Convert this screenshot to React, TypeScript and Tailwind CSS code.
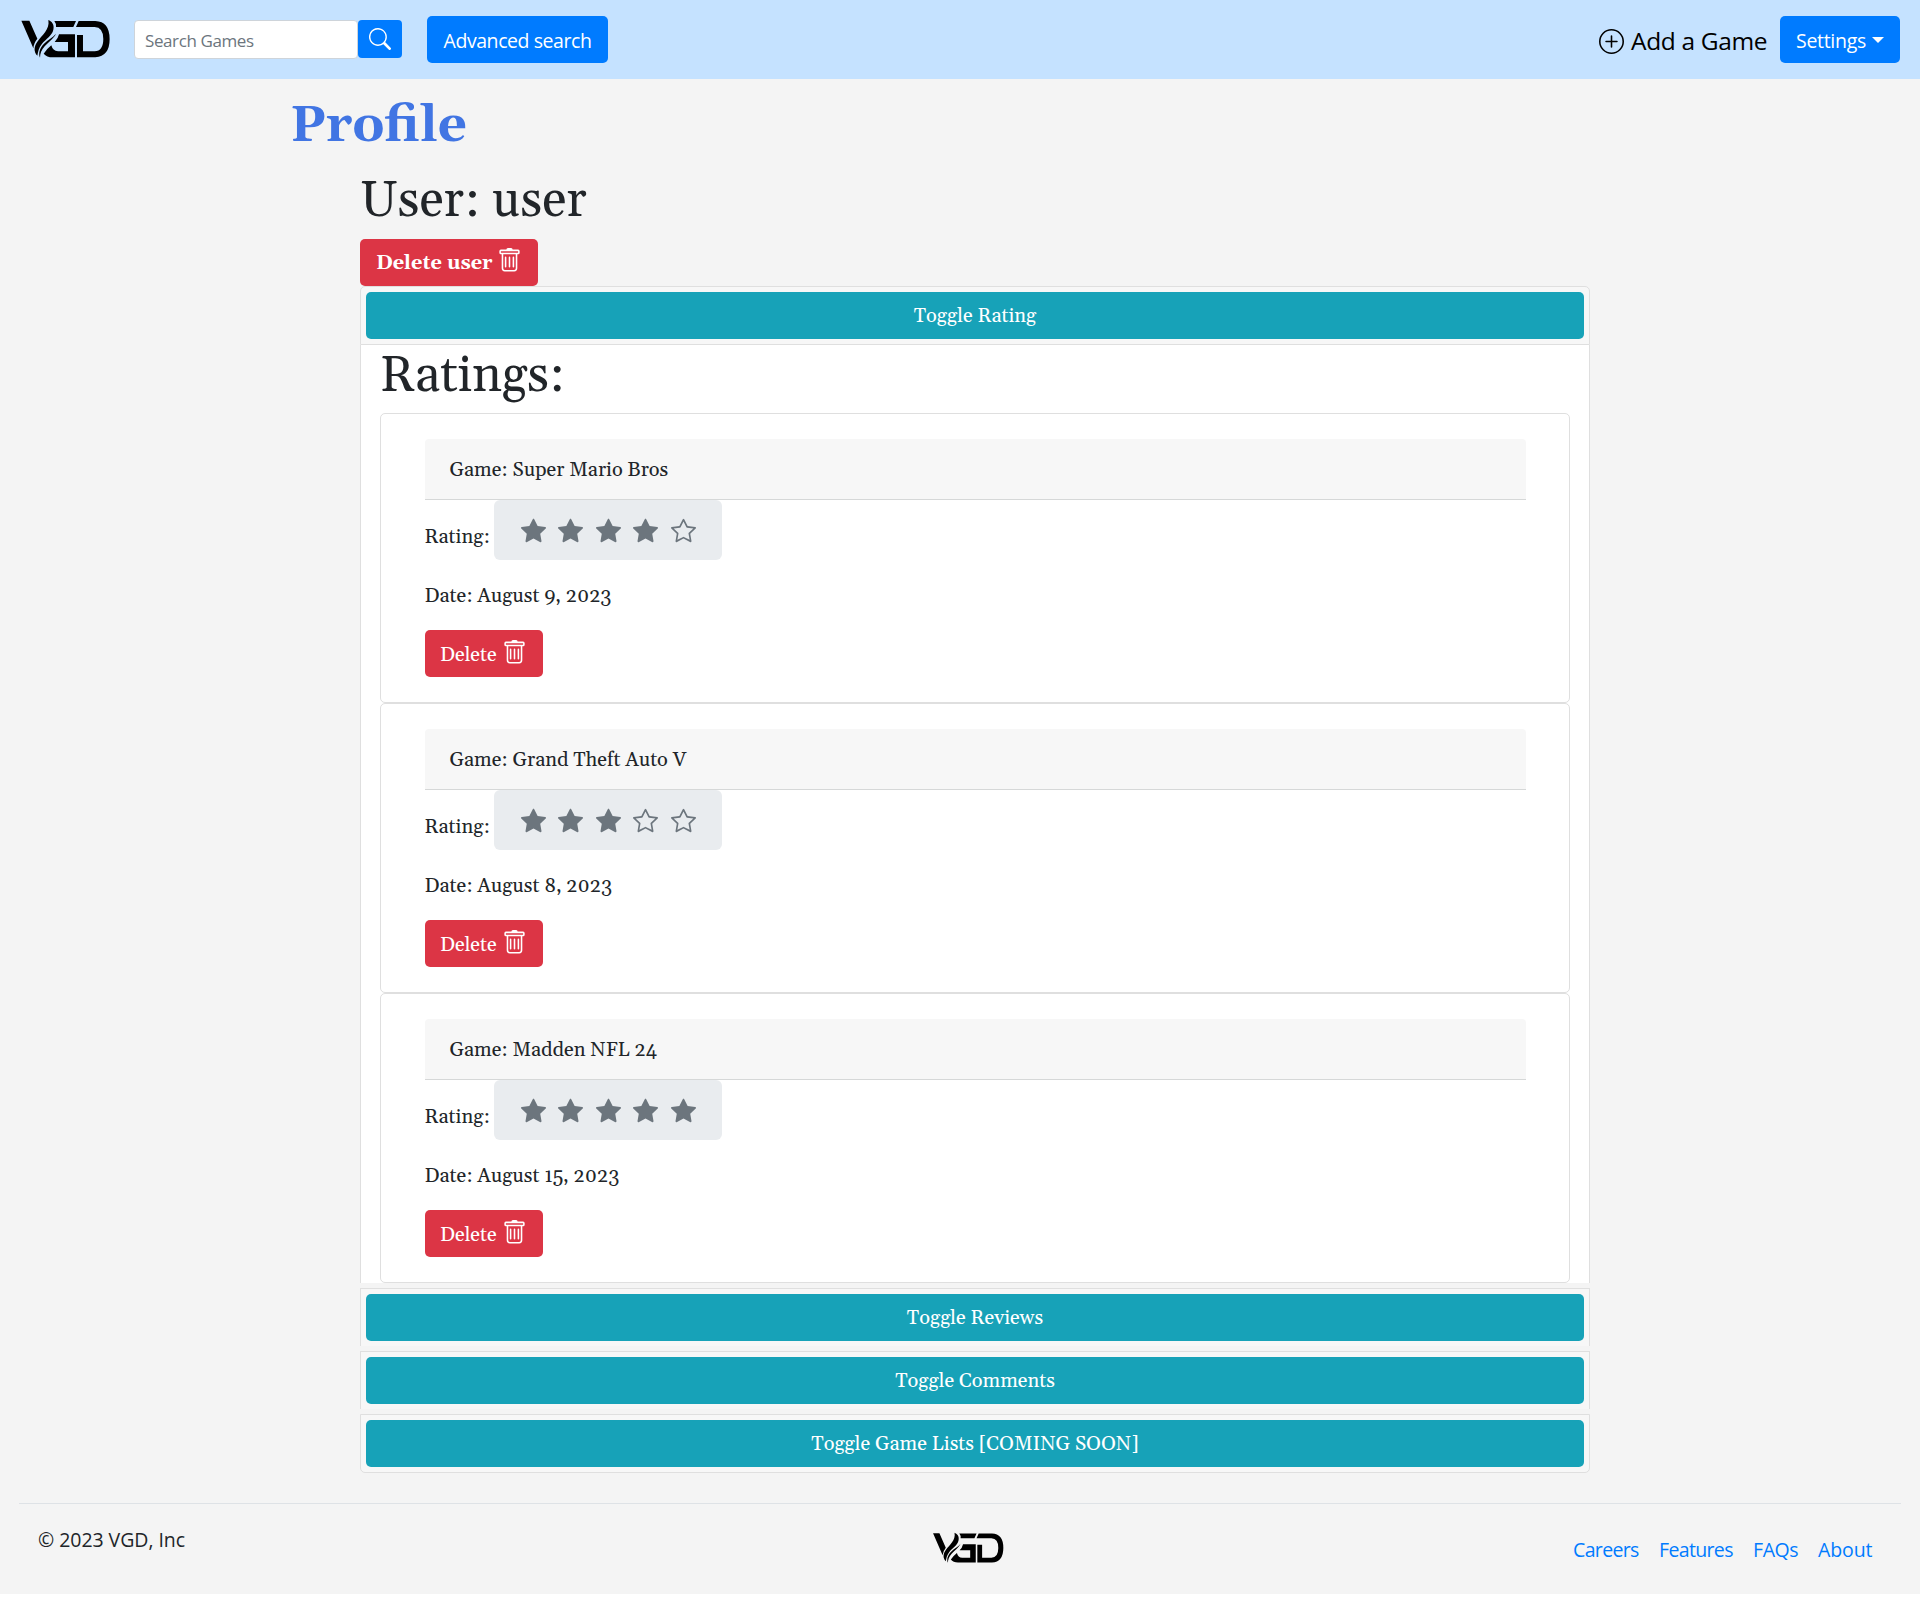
import { BsPlusCircle, BsSearch, BsStar, BsStarFill, BsTrash } from "react-icons/bs";

const ratings = [
  { game: "Super Mario Bros", stars: 4, date: "August 9, 2023" },
  { game: "Grand Theft Auto V", stars: 3, date: "August 8, 2023" },
  { game: "Madden NFL 24", stars: 5, date: "August 15, 2023" },
];

function Logo({ className }: { className: string }) {
  return (
    <svg viewBox="30 40 273 118" className={className} fill="#000" aria-label="VGD">
      <path d="M34 45H58L82 99Q71 112 70 128Z" />
      <path d="M115 43C124 46 134 56 130 72C126 90 108 100 96 114C86 126 84 138 82 150C70 138 72 122 82 108C96 88 120 72 115 43Z" />
      <path d="M138 84C130 100 116 108 104 122C94 133 90 144 90 156C84 142 90 126 102 114C114 102 128 96 138 84Z" />
      <path d="M133 46H198L190 64H138Q139 53 133 46Z" />
      <path d="M147 86H195V155H128Q110 155 101 144Q110 130 124 119Q128 136 144 137H174V109H134Q144 100 147 86Z" />
      <path d="M206 46H256Q299 48 299 100T256 155H201V88H219V137H254Q280 136 280 100Q280 65 254 64H198Z" />
    </svg>
  );
}

function DeleteButton({ label, bold }: { label: string; bold?: boolean }) {
  return (
    <button
      className={`flex h-[47px] items-start rounded-[5px] bg-[#dc3545] leading-[30px] whitespace-nowrap text-white ${bold ? "w-[178px] pl-4 font-bold" : "w-[118px] pl-[15px]"}`}
    >
      <span className={bold ? "mt-[9px]" : "mt-[10px]"}>{label}</span>
      <BsTrash className={`size-[25px] shrink-0 ${bold ? "mt-[9px] ml-1" : "mt-[10px] ml-[5px]"}`} />
    </button>
  );
}

function ToggleHeader({ label, className }: { label: string; className: string }) {
  return (
    <div className={`border-[#dfdfdf] bg-[#f7f7f7] p-[5px] ${className}`}>
      <button className="block h-[47px] w-full rounded-[5px] bg-[#17a2b8] pt-px text-center leading-[30px] text-white">{label}</button>
    </div>
  );
}

function RatingCard({ game, stars, date }: { game: string; stars: number; date: string }) {
  return (
    <div className="h-[290px] rounded-[5px] border border-[#dfdfdf] bg-white pt-[25px] pr-[43px] pl-11">
      <div className="h-[61px] rounded-t-[4px] border-b border-[#d6d8d8] bg-[#f7f7f7] px-[24.5px] pt-4">Game: {game}</div>
      <div className="flex h-[60px]">
        <span className="-ml-[0.5px] w-[69.5px] pt-[22px]">Rating:</span>
        <div className="flex h-[60px] w-[228px] gap-[12.5px] rounded-md bg-[#e9ecef] pt-[18px] pl-[26.5px] text-[#6c757d]">
          {[1, 2, 3, 4, 5].map((n) =>
            n <= stars ? <BsStarFill key={n} className="size-[25px]" /> : <BsStar key={n} className="size-[25px]" />
          )}
        </div>
      </div>
      <p className="mt-[21px] mb-[19px] -ml-[0.5px]">Date: {date}</p>
      <DeleteButton label="Delete" />
    </div>
  );
}

export default function App() {
  return (
    <div className="flex h-[1594px] flex-col bg-[#f4f4f4] font-['Gelasio','Liberation_Serif',serif] text-[20px] leading-[30px] text-[#212529]">
      <nav className="flex h-[79px] shrink-0 items-start bg-[#c5e2ff] px-5 font-['Open_Sans',sans-serif]">
        <Logo className="mt-[18.6px] h-[39.3px] w-[91px]" />
        <input
          className="mt-5 ml-[23px] h-[39px] w-56 rounded-[4px] border border-[#ced4da] bg-white px-[10px] pt-px text-[17px] tracking-[-0.4px] placeholder:text-[#6c757d]"
          placeholder="Search Games"
        />
        <button className="mt-5 flex h-[38px] w-11 items-center justify-center rounded-[4px] bg-[#007bff] text-white">
          <BsSearch className="size-[22px]" />
        </button>
        <button className="mt-4 ml-[25px] h-[47px] w-[181px] rounded-[5px] bg-[#007bff] pt-0.5 text-[19.5px] tracking-[-0.43px] text-white">
          Advanced search
        </button>
        <a className="mt-6 ml-auto flex h-[35px] items-center text-black">
          <BsPlusCircle className="size-[25px]" />
          <span className="-mt-0.5 ml-[7px] w-[149px] text-[24.5px] tracking-[-0.35px] whitespace-nowrap">Add a Game</span>
        </a>
        <button className="mt-4 flex h-[47px] w-[120px] items-center rounded-[5px] bg-[#007bff] pl-4 text-[19.5px] tracking-[-0.3px] text-white">
          <span className="mt-0.5">Settings</span>
          <span className="ml-[6px] border-x-[6px] border-t-[6px] border-x-transparent border-t-white" />
        </button>
      </nav>

      <main className="mx-auto w-[1336px] pt-[17px]">
        <h1 className="-ml-[2px] text-[51px] leading-[60px] font-bold text-[#4175e3]">Profile</h1>
        <div className="mt-4 ml-[68px] w-[1230px]">
          <h1 className="mb-[7px] text-[50px] leading-[60px]">User: user</h1>
          <DeleteButton label="Delete user" bold />
          <div>
            <ToggleHeader label="Toggle Rating" className="rounded-t-[5px] border" />
            <div className="border-x border-[#dfdfdf] bg-white px-[19px]">
              <h1 className="mb-[6px] pt-[2px] text-[50px] leading-[60px]">Ratings:</h1>
              {ratings.map((r) => (
                <RatingCard key={r.game} {...r} />
              ))}
            </div>
            <div className="mt-[5px] flex flex-col gap-[5px]">
              <ToggleHeader label="Toggle Reviews" className="border-x border-t" />
              <ToggleHeader label="Toggle Comments" className="border-x border-t" />
              <ToggleHeader label="Toggle Game Lists [COMING SOON]" className="rounded-b-[5px] border" />
            </div>
          </div>
        </div>
      </main>

      <footer className="mx-[19px] mt-auto flex h-[91px] items-start border-t border-[#dee2e6] px-[19px] font-['Open_Sans',sans-serif] text-[19.5px]">
        <p className="mt-[21px] w-[894px] tracking-[-0.05px]">© 2023 VGD, Inc</p>
        <Logo className="mt-[28px] h-[31.3px] w-[72.4px]" />
        <div className="mt-[31px] ml-auto flex pr-[9px] text-[#007bff]">
          <a className="w-[86px] tracking-[-0.65px]">Careers</a>
          <a className="w-[94px] tracking-[-0.65px]">Features</a>
          <a className="w-[65px] tracking-[-0.4px]">FAQs</a>
          <a className="w-[55px] tracking-[-0.1px]">About</a>
        </div>
      </footer>
    </div>
  );
}
